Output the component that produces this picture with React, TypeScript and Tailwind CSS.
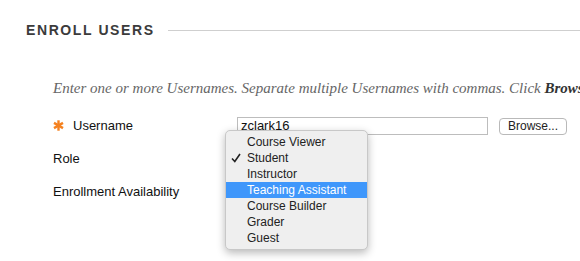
import React from 'react';

const roles = ['Course Viewer', 'Student', 'Instructor', 'Teaching Assistant', 'Course Builder', 'Grader', 'Guest'];

const Asterisk = () => (
  <svg width="11" height="11" viewBox="0 0 11 11" className="shrink-0">
    <g stroke="#f58220" strokeWidth="2.4" strokeLinecap="butt">
      <line x1="5.5" y1="0.3" x2="5.5" y2="10.7" />
      <line x1="1" y1="2.9" x2="10" y2="8.1" />
      <line x1="1" y1="8.1" x2="10" y2="2.9" />
    </g>
  </svg>
);

const RoleMenu = () => (
  <div className="absolute left-[-12px] top-[13px] w-[143px] rounded-[5px] border border-[#c8c8c8] bg-[#efefef] py-[3px] shadow-[0_3px_8px_rgba(0,0,0,0.28)]">
    {roles.map((role) => {
      const active = role === 'Teaching Assistant';
      return (
        <div
          key={role}
          className={`relative flex h-4 items-center pl-[21px] text-[12px] leading-4 ${active ? 'bg-[#3f97fb] text-white' : 'text-[#222]'}`}
        >
          {role === 'Student' && (
            <svg width="10" height="10" viewBox="0 0 10 10" className="absolute left-[5px] top-[3px]">
              <path d="M1 5.5 L3.8 8.5 L9 1" fill="none" stroke="#222" strokeWidth="1.6" />
            </svg>
          )}
          {role}
        </div>
      );
    })}
  </div>
);

export default function App() {
  return (
    <div className="h-[261px] w-[580px] overflow-hidden bg-white font-['Liberation_Sans',Arial,sans-serif]">
      <div className="flex items-center pl-[26px] pt-[22px]">
        <h2 className="text-[14px] font-bold leading-4 tracking-[1.6px] text-[#3b3b3b]">ENROLL USERS</h2>
        <div className="ml-[13px] h-px flex-1 bg-[#cfcfcf]" />
      </div>

      <p className="mt-[40px] overflow-hidden whitespace-nowrap pl-[53px] font-['Liberation_Serif',Georgia,serif] text-[15px] italic leading-5 text-[#666]">
        Enter one or more Usernames. Separate multiple Usernames with commas. Click <b className="text-[#333]">Browse</b>
      </p>

      <div className="mt-[18px] flex flex-col gap-[14px] pl-[53px] text-[13px] text-[#111]">
        <div className="flex h-[19px] items-center">
          <div className="flex w-[184px] items-center gap-[9px]">
            <Asterisk />
            <span>Username</span>
          </div>
          <div className="relative">
            <div className="flex h-[18px] w-[251px] items-center border border-[#bdbdbd] pl-[3px] leading-4">zclark16</div>
            <RoleMenu />
          </div>
          <button className="ml-[11px] mt-[2px] h-[17px] rounded-[4px] border border-[#b9b9b9] bg-white px-[8px] text-[12px] leading-[15px] text-[#222]">
            Browse...
          </button>
        </div>
        <div className="flex h-[19px] items-center">Role</div>
        <div className="flex h-[19px] items-center">Enrollment Availability</div>
      </div>
    </div>
  );
}
